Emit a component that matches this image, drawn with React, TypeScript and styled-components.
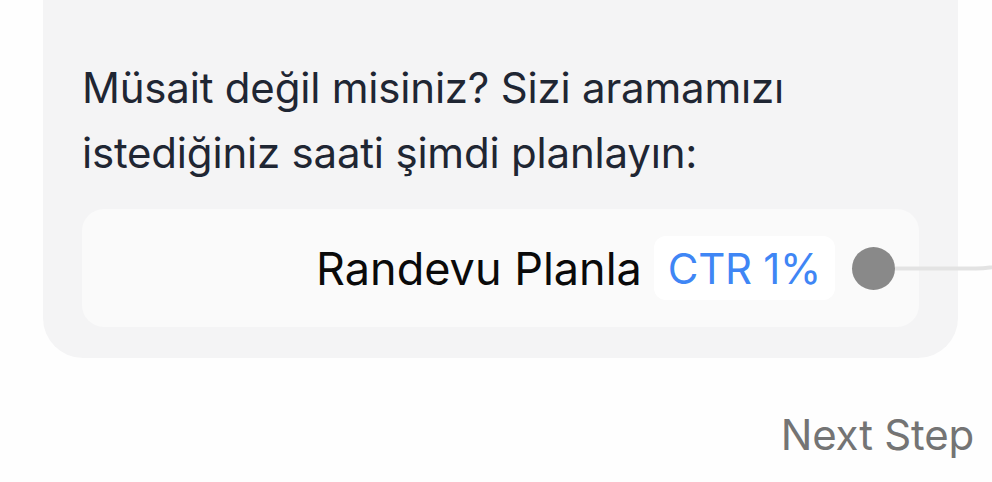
import React from "react";
import styled, { createGlobalStyle } from "styled-components";

const Global = createGlobalStyle`
  html, body { margin: 0; padding: 0; background: #fefefe; }
  body { font-family: Inter, "Noto Sans", "Liberation Sans", sans-serif; overflow: hidden; }
  * { box-sizing: border-box; }
`;

const Page = styled.div`
  width: 992px;
  height: 482px;
  padding: 0 34px 0 43px;
  display: flex;
  flex-direction: column;
`;

const Card = styled.div`
  margin-top: -40px;
  padding: 95px 39px 31px 39px;
  background: #f4f4f5;
  border-radius: 40px;
  display: flex;
  flex-direction: column;
  gap: 24px;
`;

const Prompt = styled.p`
  margin: 0;
  font-size: 42px;
  line-height: 65px;
  color: #1f2633;
  letter-spacing: -0.2px;
`;

const ActionRow = styled.div`
  position: relative;
  height: 118px;
  background: #fafafa;
  border-radius: 22px;
  display: flex;
  align-items: center;
  justify-content: flex-end;
  padding: 0 24px 0 24px;
`;

const ActionLabel = styled.span`
  font-size: 45px;
  color: #0a0a0a;
  letter-spacing: 0px;
  margin-right: 12px;
`;

const Badge = styled.span`
  height: 64px;
  padding: 0 14px;
  background: #ffffff;
  border-radius: 12px;
  display: flex;
  align-items: center;
  font-size: 42px;
  color: #3f86f5;
  letter-spacing: -0.3px;
  margin-right: 17px;
`;

const Handle = styled.span`
  position: relative;
  width: 43px;
  height: 43px;
  border-radius: 50%;
  background: #898989;
  flex: none;
`;

const Edge = styled.svg`
  position: absolute;
  left: 43px;
  top: 50%;
  margin-top: -10px;
  overflow: visible;
`;

const Footer = styled.div`
  display: flex;
  justify-content: flex-end;
  padding: 52px 0 0 0;
  margin-right: -16px;
`;

const NextStep = styled.span`
  font-size: 42px;
  line-height: 50px;
  color: #747474;
  letter-spacing: -0.2px;
`;

export default function App() {
  return (
    <>
      <Global />
      <Page>
        <Card>
          <Prompt>
            Müsait değil misiniz? Sizi aramamızı
            <br />
            istediğiniz saati şimdi planlayın:
          </Prompt>
          <ActionRow>
            <ActionLabel>Randevu Planla</ActionLabel>
            <Badge>CTR 1%</Badge>
            <Handle>
              <Edge width="120" height="20" viewBox="0 0 120 20">
                <path d="M0 10.5 L80 10.5 Q 96 10.5 120 5" fill="none" stroke="#e3e3e3" strokeWidth="4" />
              </Edge>
            </Handle>
          </ActionRow>
        </Card>
        <Footer>
          <NextStep>Next Step</NextStep>
        </Footer>
      </Page>
    </>
  );
}
